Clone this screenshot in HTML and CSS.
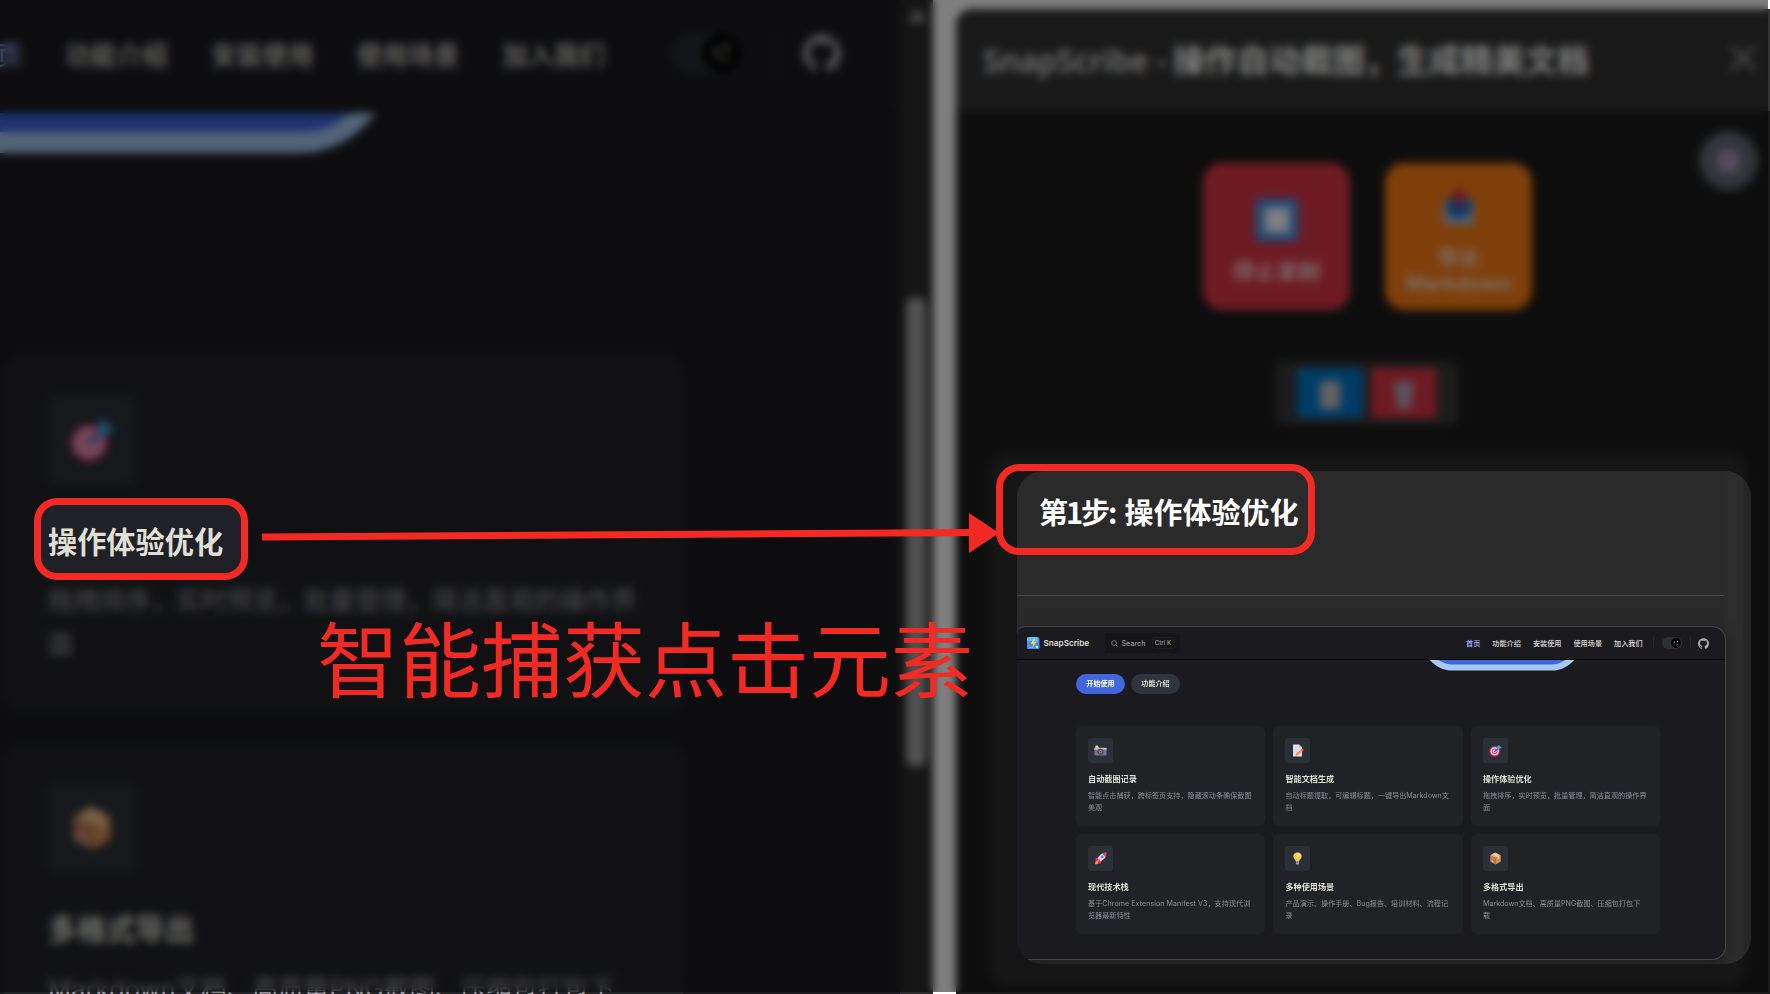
FILE: index.html
```
<!DOCTYPE html>
<html lang="zh-CN">
<head>
<meta charset="utf-8">
<title>SnapScribe</title>
<link rel="stylesheet" href="styles.css">
</head>
<body>
<svg class="sprite" aria-hidden="true">
  <symbol id="target" viewBox="0 0 32 32">
    <circle cx="14" cy="18" r="13" fill="#ca3067"/><circle cx="14" cy="18" r="10" fill="#f6d9ea"/>
    <circle cx="14" cy="18" r="7.2" fill="#e0447c"/><circle cx="14" cy="18" r="4.4" fill="#f6d9ea"/><circle cx="14" cy="18" r="2" fill="#e0447c"/>
    <path d="M13 17 24 6l3 2-11 11z" fill="#1572ba"/><path d="M20 6l5-5 1.500 5 5 1.500-5 5-5-.5z" fill="#3aa9f4"/>
  </symbol>
  <symbol id="box" viewBox="0 0 32 32">
    <path d="M16 1 29 8 16 15 3 8z" fill="#e8b17c"/><path d="M3 8l13 7v16L3 24z" fill="#c07c5c"/><path d="M29 8l-13 7v16l13-7z" fill="#d98c4e"/>
    <path d="M9 5l13 7v6l3-2v-6L12 3z" fill="#f7d3a6"/><path d="M6 20l5 3v3l-5-3z" fill="#f4c8b0"/>
  </symbol>
  <symbol id="camera" viewBox="0 0 32 32">
    <path d="M3 6h8l2 3h17v3H2V8z" fill="#a9a3b5"/><path d="M4 4h6v4H4z" fill="#ffe28a"/><rect x="1" y="10" width="30" height="18" rx="2" fill="#797386"/>
    <rect x="1" y="10" width="30" height="4" fill="#c5bfd0"/><circle cx="16" cy="19" r="7.500" fill="#4b4656"/><circle cx="16" cy="19" r="4.500" fill="#8c85a0"/><circle cx="16" cy="19" r="2" fill="#37323f"/>
  </symbol>
  <symbol id="memo" viewBox="0 0 32 32">
    <path d="M5 1h15l7 7v23H5z" fill="#e6dff0"/><path d="M20 1l7 7h-7z" fill="#b4a9c6"/><path d="M9 10h11M9 14h12M9 18h8" stroke="#cfc6dc" stroke-width="1.500"/>
    <path d="M11 29l2-6 14-11 4 4-14 11z" fill="#ff8b3d"/><path d="M25 13l3-2 4 4-3 3z" fill="#ee3b4f"/>
  </symbol>
  <symbol id="rocket" viewBox="0 0 32 32">
    <path d="M3 30c-1-5 1-9 6-9l3 4c-2 4-5 5-9 5z" fill="#ff9a2e"/><path d="M12 12 4 16l-1 6 8 1zM20 20l-4 8-6 1-1-8z" fill="#ef2f5e"/>
    <path d="M30 2c-9-1-16 4-21 14l7 7C26 18 31 11 30 2z" fill="#dcd4ee"/><path d="M30 2c-4-.5-7 0-10 2l8 8c2-3 2.500-6 2-10z" fill="#f13d5b"/><circle cx="20" cy="12" r="3.500" fill="#3c8fe0"/><path d="M8 21l4-5 4 4-5 4z" fill="#f45c83"/>
  </symbol>
  <symbol id="bulb" viewBox="0 0 32 32">
    <path d="M16 1C9 1 5 6 6 12c1 5 5 6 6 11h8c1-5 5-6 6-11 1-6-3-11-10-11z" fill="#fdc94b"/><ellipse cx="18" cy="8" rx="5" ry="4.500" fill="#ffeaa0"/>
    <path d="M12 23h8v6l-2 2h-4l-2-2z" fill="#ab9db8"/><path d="M12 26h8" stroke="#7e7190" stroke-width="1.500"/>
  </symbol>
  <symbol id="github" viewBox="0 0 24 24">
    <path fill="currentColor" d="M12 .297c-6.630 0-12 5.373-12 12 0 5.303 3.438 9.800 8.205 11.385.6.113.82-.258.82-.577 0-.285-.01-1.040-.015-2.040-3.338.724-4.042-1.610-4.042-1.610C4.422 18.070 3.633 17.700 3.633 17.700c-1.087-.744.084-.729.084-.729 1.205.084 1.838 1.236 1.838 1.236 1.070 1.835 2.809 1.305 3.495.998.108-.776.417-1.305.76-1.605-2.665-.3-5.466-1.332-5.466-5.930 0-1.310.465-2.380 1.235-3.220-.135-.303-.54-1.523.105-3.176 0 0 1.005-.322 3.300 1.230.96-.267 1.980-.399 3-.405 1.020.006 2.040.138 3 .405 2.280-1.552 3.285-1.230 3.285-1.230.645 1.653.24 2.873.12 3.176.765.840 1.230 1.910 1.230 3.220 0 4.610-2.805 5.625-5.475 5.920.42.360.81 1.096.81 2.220 0 1.606-.015 2.896-.015 3.286 0 .315.21.690.825.570C20.565 22.092 24 17.592 24 12.297c0-6.627-5.373-12-12-12"/>
  </symbol>
  <symbol id="moon" viewBox="0 0 24 24">
    <path fill="currentColor" fill-rule="evenodd" d="M9.500 2.500A9.800 9.800 0 1 0 22 15.500a8.500 8.500 0 0 1-12.500-13zM7 7.500a7.300 7.300 0 1 0 10.500 10.800A11 11 0 0 1 7 7.500z"/>
    <path fill="currentColor" d="M17.500 1l1.300 3.700L22.500 6l-3.700 1.300L17.500 11l-1.300-3.700L12.500 6l3.700-1.300z"/>
  </symbol>
</svg>

<div class="stage">
  <main class="site">
    <nav class="site-nav">
      <span class="active">首页</span><span>功能介绍</span><span>安装使用</span><span>使用场景</span><span>加入我们</span>
      <i class="toggle"><i class="knob"><svg><use href="#moon"/></svg></i></i>
      <i class="rule"></i>
      <svg class="gh"><use href="#github"/></svg>
    </nav>
    <svg class="hero" viewBox="0 0 400 44"><path d="M0 0H376Q345 40 298 40H0z" fill="#a6c8f2"/><path d="M0 0H350Q330 19 302 19H0z" fill="#3c66e2"/></svg>
    <section class="features">
      <article class="feature">
        <div class="tile"><svg><use href="#target"/></svg></div>
        <h2>操作体验优化</h2>
        <p>拖拽排序，实时预览，批量管理，简洁直观的操作界面</p>
      </article>
      <article class="feature">
        <div class="tile"><svg><use href="#box"/></svg></div>
        <h2>多格式导出</h2>
        <p>Markdown文档、高质量PNG截图、压缩包打包下</p>
      </article>
    </section>
  </main>
  <div class="scroll"><i class="up"></i><i class="thumb"></i></div>
  <aside class="panel">
    <header class="panel-head"><h1><span>SnapScribe - </span>操作自动截图，生成精美文档</h1>
      <svg class="close" viewBox="0 0 28 28"><path d="M2 2l24 24M26 2L2 26" stroke="#a8a8a8" stroke-width="3"/></svg></header>
    <div class="panel-body">
      <i class="gear"><i></i></i>
      <div class="actions">
        <div class="action stop"><svg viewBox="0 0 46 46"><rect width="46" height="46" rx="4" fill="#4a80d0"/><rect x="5" y="5" width="36" height="36" rx="3" fill="#5fa8f0"/><rect x="11" y="11" width="24" height="24" fill="#fff"/></svg><span>停止录制</span></div>
        <div class="action export"><svg viewBox="0 0 46 46"><path d="M5 12h36v30H5z" fill="#a9bfe0"/><path d="M8 10h30v16l-8 8H16l-8-8z" fill="#2274c8"/><path d="M23-4l10 12h-6v12h-8V8h-6z" fill="#d8254a"/></svg><span>导出<br>Markdown</span></div>
      </div>
      <div class="tools"><i class="tool view"><i></i></i><i class="tool trash"><i></i></i></div>
      <div class="step-back"></div>
    </div>
  </aside>
</div>

<div class="scrim"></div>

<div class="spot"><b>操作体验优化</b></div>

<section class="step">
  <h2><span>第1步:</span>操作体验优化</h2>
  <div class="shot">
    <header class="s-nav">
      <svg class="logo" viewBox="0 0 24 24"><rect width="24" height="24" rx="4" fill="#3e8ff0"/><path d="M0 4a4 4 0 0 1 4-4h16v8H0z" fill="#63bdf5"/><path d="M4 18v-4M4 20h8M19 5v6" stroke="#8cc4f8" stroke-width="1.500"/><rect x="17" y="17" width="4" height="4" rx="1" fill="#e9f5ff"/><path d="M14 2 7 13h5l-2 8 8-12h-5l3-7z" fill="#ffdc3c"/></svg>
      <b>SnapScribe</b>
      <div class="search"><svg viewBox="0 0 16 16"><circle cx="7" cy="7" r="5.500" fill="none" stroke="#98989f" stroke-width="1.600"/><path d="M11 11l4 4" stroke="#98989f" stroke-width="1.600"/></svg><span>Search</span><kbd>Ctrl K</kbd></div>
      <div class="links"><span class="active">首页</span><span>功能介绍</span><span>安装使用</span><span>使用场景</span><span>加入我们</span></div>
      <i class="s-rule"></i>
      <i class="s-toggle"><i><svg><use href="#moon"/></svg></i></i>
      <i class="s-rule r2"></i>
      <svg class="s-gh"><use href="#github"/></svg>
    </header>
    <div class="s-main">
      <svg class="s-hero" viewBox="0 0 145 11"><path d="M0 0H145C138 6.500 132 10.600 122 10.600H23C13 10.600 7 6.500 0 0z" fill="#a6c8f2"/><path d="M9 0H136C131 3 127 4.600 120 4.600H25C18 4.600 14 3 9 0z" fill="#3c66e2"/></svg>
      <div class="cta"><span class="brand">开始使用</span><span>功能介绍</span></div>
      <div class="grid">
        <article><div class="ico"><svg><use href="#camera"/></svg></div><h3>自动截图记录</h3><p>智能点击捕获，跨标签页支持，隐藏滚动条确保截图美观</p></article>
        <article><div class="ico"><svg><use href="#memo"/></svg></div><h3>智能文档生成</h3><p>自动标题提取，可编辑标题，一键导出Markdown文档</p></article>
        <article><div class="ico"><svg><use href="#target"/></svg></div><h3>操作体验优化</h3><p>拖拽排序，实时预览，批量管理，简洁直观的操作界面</p></article>
        <article><div class="ico"><svg><use href="#rocket"/></svg></div><h3>现代技术栈</h3><p><span class="wide">基于Chrome Extension Manifest V3，支持现代浏</span><br>览器最新特性</p></article>
        <article><div class="ico"><svg><use href="#bulb"/></svg></div><h3>多种使用场景</h3><p>产品演示、操作手册、Bug报告、培训材料、流程记录</p></article>
        <article><div class="ico"><svg><use href="#box"/></svg></div><h3>多格式导出</h3><p>Markdown文档、高质量PNG截图、压缩包打包下<br>载</p></article>
      </div>
    </div>
  </div>
</section>

<div class="ring ring-a"></div>
<div class="ring ring-b"></div>
<svg class="arrow" viewBox="0 0 740 44"><path d="M0 24 710 19.500" stroke="#f32a24" stroke-width="7"/><path d="M707 0v40l30-20z" fill="#f32a24"/></svg>
<div class="caption">智能捕获点击元素</div>
</body>
</html>
```
FILE: styles.css
```
* { box-sizing: border-box; margin: 0; padding: 0; }
body { position: relative; width: 1770px; height: 994px; overflow: hidden; background: #1b1b1f; font-family: Inter, "Noto Sans CJK SC", sans-serif; }
i { font-style: normal; display: block; }
svg { display: block; }
.sprite { position: absolute; width: 0; height: 0; }

.stage { display: flex; width: 1770px; height: 994px; background: #fff; }

/* documentation site, left */
.site { width: 900px; height: 994px; overflow: hidden; background: #1b1b1f; }
.site-nav { display: flex; align-items: center; height: 113px; padding-bottom: 4px; border-bottom: 3px solid #151518; color: #dfdfd6; font-size: 25.600px; font-weight: 500; white-space: nowrap; }
.site-nav span { margin-right: 43.300px; }
.site-nav .active { margin-left: -29px; color: #a8b1ff; }
.toggle { width: 70px; height: 40px; margin-left: 24px; padding: 1px 1px 1px 31px; border-radius: 20px; background: #25292e; }
.knob { width: 38px; height: 38px; padding: 8px; border-radius: 50%; background: #000; color: #dfdfd6; }
.knob svg { width: 22px; height: 22px; }
.rule { width: 2px; height: 42px; margin: 0 26px 0 33px; background: #25252a; }
.gh { width: 38px; height: 38px; color: #aaaaaf; }
.hero { width: 400px; height: 44px; }
.features { display: flex; flex-direction: column; gap: 30px; padding: 198px 0 0 4px; }
.feature { width: 679px; height: 358px; padding: 41px 44px; border-radius: 20px; background: #222327; }
.tile { display: grid; place-items: center; width: 88px; height: 88px; border-radius: 10px; background: #2d3139; }
.tile svg { width: 46px; height: 48px; }
.feature h2 { margin-top: 36px; font-size: 29.200px; line-height: 44px; color: #dfdfd6; }
.feature p { margin-top: 15px; font-size: 25.600px; line-height: 44px; color: #98989f; }

.scroll { width: 33px; padding: 8px 5px 0; background: #2b2b2b; }
.up { width: 0; height: 0; margin-left: 3px; border: 9px solid transparent; border-top: 0; border-bottom: 14px solid #999; }
.thumb { width: 20px; height: 470px; margin: 275px 0 0 1px; border-radius: 9px; background: #a2a2a2; }

/* extension side panel */
.panel { flex: 1; height: 986px; margin: 9px 0 0 23px; overflow: hidden; border-radius: 16px 0 0 0; background: #1b1b1b; }
.panel-head { display: flex; align-items: center; justify-content: space-between; height: 102px; padding: 0 13px 4px 27px; background: #343434; }
.panel-head h1 { font: 700 32px "Open Sans", "Noto Sans CJK SC", sans-serif; color: #fff; white-space: nowrap; }
.panel-head span { display: inline-block; width: 190px; font-weight: 600; font-size: 31px; white-space: pre; color: #f0f0f0; }
.close { width: 28px; height: 28px; }
.gear { float: right; display: grid; place-items: center; width: 59px; height: 59px; margin: 20px 12px 0 0; border-radius: 50%; background: #626a73; }
.gear i { width: 23px; height: 24px; border-radius: 8px; background: #a297b3; }
.panel-body { height: 884px; }
.actions { display: flex; gap: 35px; padding: 52px 0 0 247px; }
.action { display: flex; flex-direction: column; align-items: center; width: 147px; height: 147px; padding-top: 34px; border-radius: 19px; text-align: center; color: #f8e9e6; font-size: 22px; font-weight: 500; line-height: 26px; }
.action svg { width: 44px; height: 46px; margin-bottom: 15px; }
.stop { background: #dc3545; }
.export { padding-top: 25px; background: #fd7e14; }
.export svg { width: 38px; height: 42px; margin-bottom: 15px; overflow: visible; }
.export span { font-size: 21px; }
.tools { display: flex; gap: 8px; width: 182px; height: 64px; margin: 51px 0 0 320px; padding: 7px 21px; border-radius: 8px; background: #393939; }
.tool { display: grid; place-items: center; width: 66px; height: 50px; border-radius: 5px; }
.tool i { width: 20px; height: 28px; margin-top: 4px; border-radius: 2px; background: #cbbfca; }
.view { background: #007acc; }
.trash { background: #dc3545; }
.trash i { background: #b9a0b6; clip-path: polygon(0 0, 100% 0, 85% 100%, 15% 100%); }
.step-back { height: 534px; margin: 27px 24px 0 33px; border-radius: 20px; background: #2c2c2c; }

.scrim { position: absolute; left: 0; top: 0; width: 1768px; height: 992px; background: rgba(0, 0, 0, .5); backdrop-filter: blur(4.500px); }

/* sharp cut-outs */
.spot { position: absolute; left: 38px; top: 502px; width: 204px; height: 74px; padding-left: 10px; border-radius: 18px; background: #202127; color: #dfdfd6; font-size: 29.200px; line-height: 81px; white-space: nowrap; }
.step { position: absolute; left: 1017px; top: 471px; width: 734px; height: 493px; overflow: hidden; border-radius: 26px; background: linear-gradient(90deg, #2a2a2a 707px, #2d2d2d 707px, #2d2d2d 725px, #262626 728px); }
.step h2 { width: 707px; height: 125px; padding: 19px 0 0 22px; border-bottom: 1px solid #4a4a4a; color: #fff; font: 700 29px/43px "Noto Sans CJK SC", sans-serif; white-space: nowrap; }
.step h2 span { display: inline-block; width: 85.500px; letter-spacing: -2px; }
.shot { width: 709px; height: 334px; margin-top: 30px; overflow: hidden; border: 1px solid #464648; border-left: 0; border-radius: 8px 14px 14px 0; background: #1b1b1f; box-shadow: 0 4px 16px rgba(0, 0, 0, .3); }
.s-nav { display: flex; align-items: center; height: 33px; padding-left: 10px; border-bottom: 1px solid #050506; color: #dfdfd6; font-size: 7.150px; font-weight: 500; white-space: nowrap; }
.logo { width: 12.500px; height: 12.500px; }
.s-nav b { width: 61px; margin-left: 4px; font-size: 8.200px; font-weight: 600; }
.search { display: flex; align-items: center; width: 75px; height: 20px; padding-left: 6px; border-radius: 4px; background: #161618; color: #98989f; }
.search svg { width: 7px; height: 7px; margin-right: 4px; }
.search span { width: 30px; }
.search kbd { width: 23px; height: 12px; border: 1px solid #1f1f22; border-radius: 2px; font: 500 6.200px/10px Inter, sans-serif; text-align: center; }
.links { display: flex; gap: 12px; margin-left: 286.500px; }
.links .active { color: #a8b1ff; }
.s-rule { width: 1px; height: 12px; margin: 0 8px 0 10px; background: #29292d; }
.r2 { margin: 0 7.500px 0 8px; }
.s-toggle { width: 20px; height: 12px; padding: 1px 1px 1px 9px; border-radius: 6px; background: #2b2f36; }
.s-toggle i { width: 10px; height: 10px; padding: 2px; border-radius: 50%; background: #000; }
.s-toggle svg { width: 6px; height: 6px; }
.s-gh { width: 11px; height: 11px; color: #aaaab0; }
.s-main { position: relative; padding: 14px 0 0 59px; }
.s-hero { position: absolute; left: 412px; top: 0; width: 146px; height: 11px; }
.cta { display: flex; gap: 6px; }
.cta span { width: 49px; height: 19.500px; border-radius: 10px; background: #30353c; color: #dfdfd6; font-size: 7.100px; font-weight: 700; line-height: 19px; text-align: center; }
.cta .brand { background: #4166dd; color: #fff; }
.grid { display: grid; grid-template-columns: repeat(3, 189.300px); gap: 8px 8.200px; margin-top: 32.500px; }
.grid article { height: 100px; padding: 12px; border-radius: 6px; background: #202226; }
.ico { display: grid; place-items: center; width: 25px; height: 25px; border-radius: 3px; background: #2b3036; }
.ico svg { width: 13px; height: 13px; }
.grid h3 { margin-top: 10px; font-size: 8.130px; line-height: 12px; color: #dfdfd6; }
.grid p { width: 168px; margin-top: 5px; font-size: 7.120px; line-height: 12px; color: #8e8e95; }
.wide { letter-spacing: .05px; }

/* annotations */
.ring { position: absolute; border: 7px solid #f32a24; border-radius: 23px; }
.ring-a { left: 34px; top: 498px; width: 214px; height: 82px; }
.ring-b { left: 996px; top: 464px; width: 319px; height: 91px; }
.arrow { position: absolute; left: 262px; top: 512.500px; width: 740px; height: 44px; }
.caption { position: absolute; left: 317px; top: 596px; font: 400 82px/120px "Noto Sans CJK SC", sans-serif; color: #f32a24; white-space: nowrap; }
```
